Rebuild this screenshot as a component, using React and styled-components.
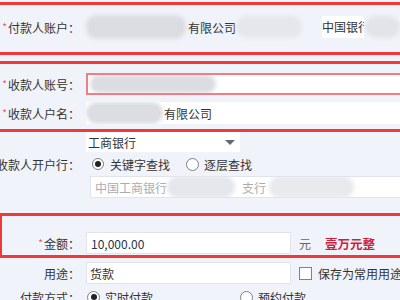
import React from 'react';
import styled, { createGlobalStyle } from 'styled-components';

const Global = createGlobalStyle`
  html, body { margin: 0; padding: 0; background: #f1f3fa; }
  body {
    font-family: "Noto Sans CJK SC", "Microsoft YaHei", sans-serif;
    font-size: 12px; color: #333;
  }
`;

const RED = '#f03a3a';

const Page = styled.div`
  width: 400px;
  height: 300px;
  overflow: hidden;
  padding-top: 2px;
  box-sizing: border-box;
`;

const Mark = styled.section`
  box-sizing: border-box;
  width: ${(p) => (p.$left ? '401px' : '400px')};
  box-shadow: inset 0 3px 0 ${RED}, inset 0 -3px 0 ${RED}
    ${(p) => (p.$left ? `, inset 3px 0 0 ${RED}` : '')};
  margin: ${(p) => p.$mt || 0}px 0 0 ${(p) => (p.$left ? '-1px' : '0')};
  padding: ${(p) => p.$pad};
  padding-left: ${(p) => (p.$left ? '3px' : '0')};
  display: flex;
  flex-direction: column;
  gap: ${(p) => p.$gap || 0}px;
`;

const Row = styled.div`
  display: grid;
  grid-template-columns: ${(p) => p.$col || 80}px minmax(0, 1fr);
  column-gap: 6px;
  align-items: center;
  height: 22px;
  margin-top: ${(p) => p.$mt || 0}px;
`;

const Label = styled.div`
  display: flex;
  justify-content: flex-end;
  align-items: center;
  white-space: nowrap;
  color: #333;
  grid-row: ${(p) => p.$row || 'auto'};
  grid-column: 1;
`;

const Req = styled.span`
  color: #f0506e;
  font-size: 10px;
  margin-right: 1px;
  vertical-align: 2px;
`;

const Line = styled.div`
  display: flex;
  align-items: center;
  min-width: 0;
  white-space: nowrap;
  grid-column: 2;
  height: 100%;
`;

/* soft grey smudge standing in for redacted content */
const Blur = styled.span`
  display: block;
  flex: ${(p) => (p.$grow ? '1 1 0' : 'none')};
  min-width: 0;
  width: ${(p) => p.$w - 6}px;
  height: ${(p) => (p.$h || 22) - 6}px;
  margin: 0 3px 0 ${(p) => (p.$ml || 0) + 3}px;
  background: ${(p) => p.$c || '#dcdde2'};
  border-radius: ${(p) => p.$r || 8}px;
  box-shadow: 0 0 4px 3px ${(p) => p.$c || '#dcdde2'};
`;

const Txt = styled.span`
  flex: none;
  color: ${(p) => p.$c || '#333'};
  margin-left: ${(p) => p.$ml || 0}px;
`;

const Clip = styled.span`
  flex: none;
  display: block;
  width: ${(p) => p.$w}px;
  overflow: hidden;
  background: #fff;
  margin-left: ${(p) => p.$ml || 0}px;
  line-height: 22px;
`;

const Field = styled.div`
  display: flex;
  align-items: center;
  box-sizing: border-box;
  height: 22px;
  flex: ${(p) => (p.$w ? 'none' : '1 1 0')};
  min-width: 0;
  width: ${(p) => (p.$w ? `${p.$w}px` : 'auto')};
  margin-left: ${(p) => p.$ml || 0}px;
  background: #fff;
  border: ${(p) => (p.$error ? '2px solid #f37d82' : p.$plain ? 'none' : '1px solid #e1e4ec')};
  border-right-width: ${(p) => (p.$w ? (p.$plain ? '0' : '1px') : '0')};
  padding-left: ${(p) => p.$pl || 0}px;
  overflow: hidden;
  white-space: nowrap;
  color: ${(p) => p.$c || '#333'};
`;

const Bank = styled.div`
  display: grid;
  grid-template-columns: 80px minmax(0, 1fr);
  grid-template-rows: 20px 22px 22px;
  column-gap: 6px;
  row-gap: 1px;
  align-items: center;
`;

const Select = styled.div`
  grid-column: 2;
  grid-row: 1;
  display: flex;
  align-items: center;
  justify-content: space-between;
  width: 154px;
  height: 20px;
  box-sizing: border-box;
  background: #fff;
  padding: 0 5px 0 2px;
  color: #333;
`;

const Caret = styled.span`
  width: 0;
  height: 0;
  border-left: 5px solid transparent;
  border-right: 5px solid transparent;
  border-top: 5px solid #5c6b7a;
`;

const Radios = styled.div`
  display: flex;
  align-items: center;
  grid-column: 2;
  margin-left: ${(p) => p.$ml || 6}px;
  white-space: nowrap;
`;

const Radio = styled.span`
  flex: none;
  box-sizing: border-box;
  width: ${(p) => p.$s || 12}px;
  height: ${(p) => p.$s || 12}px;
  border-radius: 50%;
  border: 1px solid #7d8188;
  background: #fff;
  display: flex;
  align-items: center;
  justify-content: center;
  margin-left: ${(p) => p.$ml || 0}px;
  &::after {
    content: '';
    width: 6px;
    height: 6px;
    border-radius: 50%;
    background: ${(p) => (p.$on ? '#222' : 'transparent')};
  }
`;

const Unit = styled.span`
  color: #666;
  margin-left: 8px;
`;

const Words = styled.span`
  color: #cc1f3c;
  font-weight: 700;
  font-size: 12.5px;
  margin-left: 14px;
`;

const Check = styled.span`
  flex: none;
  box-sizing: border-box;
  width: 13px;
  height: 13px;
  border: 1px solid #7d8188;
  background: #fff;
  margin-left: 8px;
`;

const Amount = styled.span`
  color: #23324f;
`;

export default function App() {
  return (
    <>
      <Global />
      <Page>
        <Mark $pad="14px 0 17px 0">
          <Row>
            <Label><span><Req>*</Req>付款人账户：</span></Label>
            <Line>
              <Blur $w={100} $h={24} />
              <Txt $ml={2}>有限公司</Txt>
              <Blur $w={66} $c="#e6e7ec" />
              <Clip $w={42} $ml={20}>中国银行</Clip>
              <Blur $w={40} $c="#e3e4e9" $ml={1} $grow />
            </Line>
          </Row>
        </Mark>

        <Mark $mt={6} $pad="12px 0 8px 0" $gap={7}>
          <Row>
            <Label><span><Req>*</Req>收款人账号：</span></Label>
            <Line>
              <Field $error $pl={2}>
                <Blur $w={126} $h={18} />
              </Field>
            </Line>
          </Row>
          <Row>
            <Label><span><Req>*</Req>收款人户名：</span></Label>
            <Line>
              <Field $plain>
                <Blur $w={77} />
                <Txt $ml={1}>有限公司</Txt>
              </Field>
            </Line>
          </Row>
        </Mark>

        <Bank>
          <Select>
            <span>工商银行</span>
            <Caret />
          </Select>
          <Label $row={2}><span>收款人开户行：</span></Label>
          <Radios>
            <Radio $on />
            <Txt $ml={6}>关键字查找</Txt>
            <Radio $s={13} $ml={16} />
            <Txt $ml={5}>逐层查找</Txt>
          </Radios>
          <Line>
            <Field $ml={4} $pl={4} $c="#a9acb3">
              <span>中国工商银行</span>
              <Blur $w={68} $c="#e6e7ec" />
              <Txt $ml={7} $c="#a9acb3">支行</Txt>
              <Blur $w={85} $c="#e9eaee" $ml={3} />
            </Field>
          </Line>
        </Bank>

        <Mark $left $mt={15} $pad="19px 0 4px 0">
          <Row $col={78}>
            <Label><span><Req>*</Req>金额：</span></Label>
            <Line>
              <Field $w={205} $pl={4}>
                <Amount>10,000.00</Amount>
              </Field>
              <Unit>元</Unit>
              <Words>壹万元整</Words>
            </Line>
          </Row>
        </Mark>

        <Row $mt={4}>
          <Label><span>用途：</span></Label>
          <Line>
            <Field $w={205} $pl={3}>货款</Field>
            <Check />
            <Txt $ml={6}>保存为常用用途</Txt>
          </Line>
        </Row>

        <Row $mt={2}>
          <Label><span>付款方式：</span></Label>
          <Radios $ml={1}>
            <Radio $s={13} $on />
            <Txt $ml={5}>实时付款</Txt>
            <Radio $s={13} $ml={87} />
            <Txt $ml={5}>预约付款</Txt>
          </Radios>
        </Row>
      </Page>
    </>
  );
}
